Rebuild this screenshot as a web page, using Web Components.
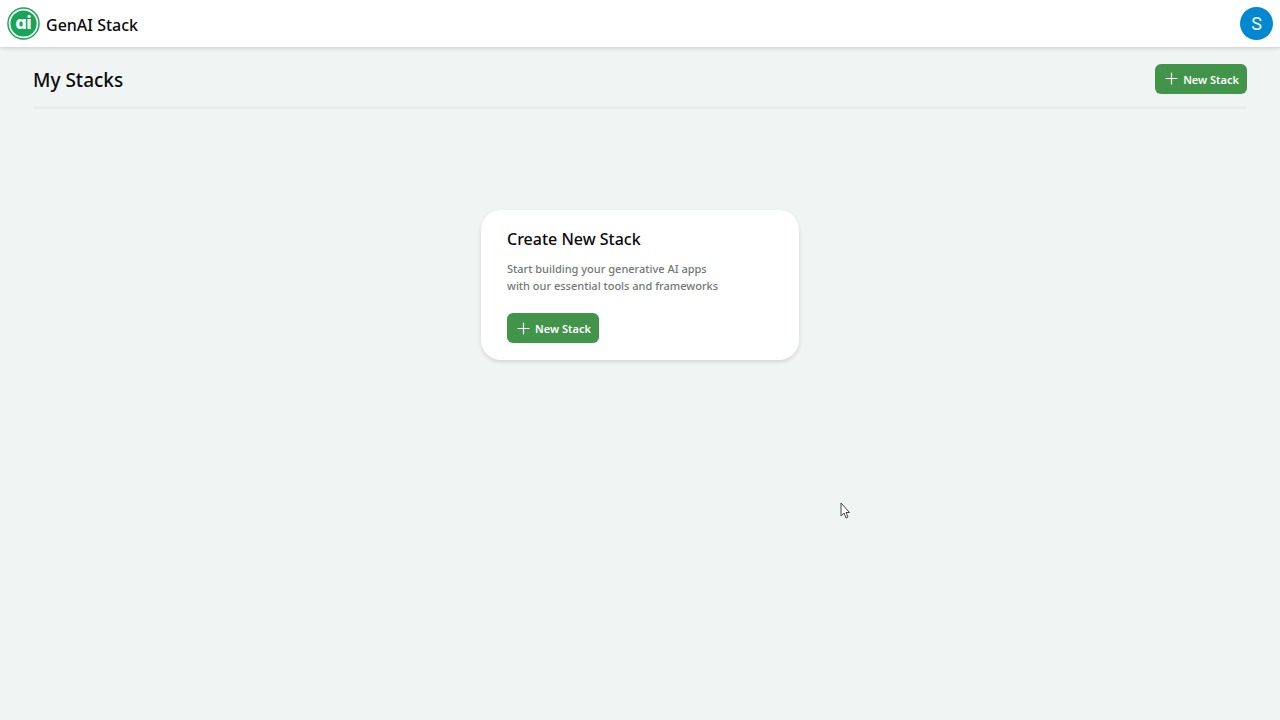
<!DOCTYPE html>
<html lang="en">
<head>
<meta charset="utf-8">
<meta name="viewport" content="width=device-width, initial-scale=1">
<title>GenAI Stack</title>
<style>
body { margin: 0; min-height: 100vh; background: #f0f4f3; color: #0a0a0a; font-family: "Noto Sans", "Open Sans", sans-serif; }
</style>
</head>
<body>
<stacks-page></stacks-page>
<script>
const define = (name, html) => {
  const template = document.createElement('template');
  template.innerHTML = html;
  customElements.define(name, class extends HTMLElement {
    constructor() {
      super();
      this.attachShadow({ mode: 'open' }).append(template.content.cloneNode(true));
    }
  });
};

define('brand-logo', `
<style>
:host { display: block; width: 33px; height: 33px; }
svg { display: block; width: 100%; height: 100%; }
text { font: 800 18px Inter, sans-serif; font-feature-settings: "cv11", "ss03"; fill: #fff; }
</style>
<svg viewBox="0 0 34 34" role="img" aria-label="ai">
  <circle cx="17" cy="17" r="16" fill="#fff" stroke="#18a558" stroke-width="1.500"/>
  <circle cx="17" cy="17" r="13.500" fill="#18a558"/>
  <text x="17" y="23" text-anchor="middle">ai</text>
</svg>`);

define('user-avatar', `
<style>
:host { display: block; }
button { display: grid; place-items: center; width: 33px; height: 33px; padding: 0; border: 0; border-radius: 50%; background: #0288d1; color: #fff; font: 400 18px/33px Roboto, sans-serif; }
</style>
<button type="button"><slot></slot></button>`);

define('app-header', `
<style>
:host { display: block; }
header { display: flex; align-items: center; justify-content: space-between; height: 47px; padding: 0 7px; box-sizing: border-box; background: #fff; box-shadow: 0 1px 4px #0000002e; }
.brand { display: flex; align-items: center; gap: 6px; color: inherit; text-decoration: none; font-size: 16px; font-weight: 500; line-height: 24px; }
.brand span { padding-top: 2px; }
</style>
<header>
  <a class="brand" href="#"><brand-logo></brand-logo><span><slot></slot></span></a>
  <user-avatar>S</user-avatar>
</header>`);

define('new-button', `
<style>
:host { display: block; width: max-content; }
button { display: flex; align-items: center; gap: 5px; height: 30px; padding: 0 8px 0 10px; border: 0; border-radius: 6px; background: #41944a; color: #fff; font: 600 11px/16px "Noto Sans", "Open Sans", sans-serif; }
svg { display: block; width: 13px; height: 13px; }
span { padding-top: 2px; }
</style>
<button type="button">
  <svg viewBox="0 0 13 13" aria-hidden="true"><path d="M6.500 1v11M1 6.500h11" fill="none" stroke="#fff" stroke-width="1.200" stroke-linecap="round"/></svg>
  <span><slot></slot></span>
</button>`);

define('page-heading', `
<style>
:host { display: flex; align-items: center; justify-content: space-between; padding-bottom: 11px; border-bottom: 3px solid #e9eded; }
h1 { margin: 0; padding-top: 3px; font-size: 19px; font-weight: 500; line-height: 30px; }
</style>
<h1><slot></slot></h1>
<slot name="action"></slot>`);

define('stack-card', `
<style>
:host { display: block; width: 318px; max-width: 100%; box-sizing: border-box; padding: 17px 26px; border-radius: 20px; background: #fff; box-shadow: 0 2px 4px #0000001f; }
h2 { margin: 0 0 9px; font-size: 16px; font-weight: 500; line-height: 24px; }
p { margin: 0 0 19px; color: #727876; font-size: 11px; font-weight: 500; line-height: 17px; }
</style>
<h2><slot name="title"></slot></h2>
<p><slot></slot></p>
<slot name="action"></slot>`);

define('pointer-cursor', `
<style>
:host { position: absolute; left: 840px; top: 502px; width: 11px; height: 18px; pointer-events: none; }
svg { display: block; }
</style>
<svg width="11" height="18" viewBox="0 0 11 18" aria-hidden="true"><path d="M1 1v13l3-3 2 5 2-1-2-4.500h3.500z" fill="#fff" stroke="#444" stroke-width="1"/></svg>`);

define('stacks-page', `
<style>
:host { display: block; }
main { padding: 15px 33px 40px; }
stack-card { margin: 101px auto 0; }
</style>
<app-header>GenAI Stack</app-header>
<main>
  <page-heading>My Stacks<new-button slot="action">New Stack</new-button></page-heading>
  <stack-card>
    <span slot="title">Create New Stack</span>
    Start building your generative AI apps<br>with our essential tools and frameworks
    <new-button slot="action">New Stack</new-button>
  </stack-card>
</main>
<pointer-cursor></pointer-cursor>`);
</script>
</body>
</html>
